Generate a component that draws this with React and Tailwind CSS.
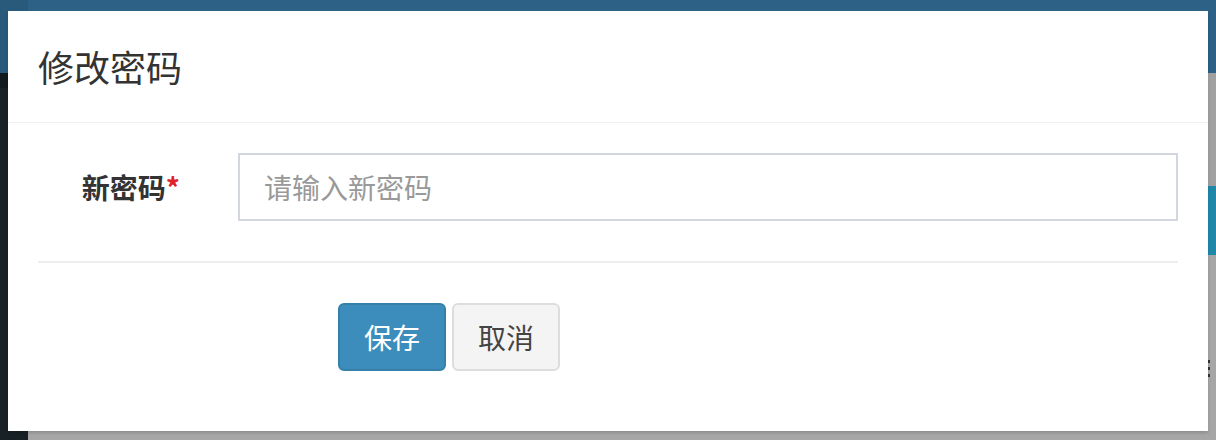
import React from "react";

const FONT = { fontFamily: '"Noto Sans CJK SC", "Noto Sans", sans-serif' };

export default function App() {
  return (
    <div className="relative w-[1216px] h-[440px] overflow-hidden bg-[#a6a6a6]" style={FONT}>
      {/* Backdrop page (dimmed) */}
      <div className="flex flex-col h-full">
        <div className="flex h-[73px] shrink-0">
          <div className="w-[28px] bg-[#2a5a7b]" />
          <div className="flex-1 bg-[#2d6286]" />
        </div>
        <div className="flex flex-1">
          <div className="w-[28px] flex flex-col">
            <div className="h-[15px] bg-[#111a1e]" />
            <div className="flex-1 bg-[#182226]" />
          </div>
          <div className="flex-1 flex flex-col items-end">
            <div className="h-[113px] w-full bg-[#a1a1a1]" />
            <div className="h-[69px] w-[10px] bg-[#1f88a8]" />
            <div className="flex-1 w-full flex flex-col items-end">
              <div className="h-[105px]" />
              <div className="flex flex-col gap-[4px] pr-[6px]">
                <div className="w-[3px] h-[3px] bg-[#333]" />
                <div className="w-[3px] h-[3px] bg-[#333]" />
                <div className="w-[3px] h-[3px] bg-[#333]" />
              </div>
            </div>
          </div>
        </div>
      </div>

      {/* Modal */}
      <div className="absolute left-[8px] top-[11px] w-[1200px] h-[420px] bg-white shadow-[0_2px_3px_rgba(0,0,0,0.15)]">
        <div className="px-[30px] py-[30px] border-b border-[#f0f0f0]">
          <h4 className="text-[36px] leading-[51px] text-[#333333] m-0">修改密码</h4>
        </div>
        <div className="px-[30px] pt-[30px]">
          <div className="flex items-center">
            <label className="w-[170px] pr-[28px] text-right text-[28px] font-bold text-[#333333] leading-[40px]">
              新密码<span className="text-[#e0202a]">*</span>
            </label>
            <div className="flex-1 px-[30px] pr-0">
              <input
                type="password"
                placeholder="请输入新密码"
                className="w-full h-[68px] border-2 border-[#d2d6de] px-[24px] text-[28px] text-[#555] placeholder:text-[#999999] outline-none"
                style={FONT}
              />
            </div>
          </div>
          <div className="h-[2px] bg-[#eeeeee] mt-[40px]" />
          <div className="flex gap-[6px] pl-[300px] mt-[40px]">
            <button
              className="h-[68px] px-[24px] text-[28px] leading-[40px] text-white bg-[#3c8dbc] border-2 border-[#367fa9] rounded-[6px]"
              style={FONT}
            >
              保存
            </button>
            <button
              className="h-[68px] px-[24px] text-[28px] leading-[40px] text-[#444444] bg-[#f4f4f4] border-2 border-[#dddddd] rounded-[6px]"
              style={FONT}
            >
              取消
            </button>
          </div>
        </div>
      </div>
    </div>
  );
}
